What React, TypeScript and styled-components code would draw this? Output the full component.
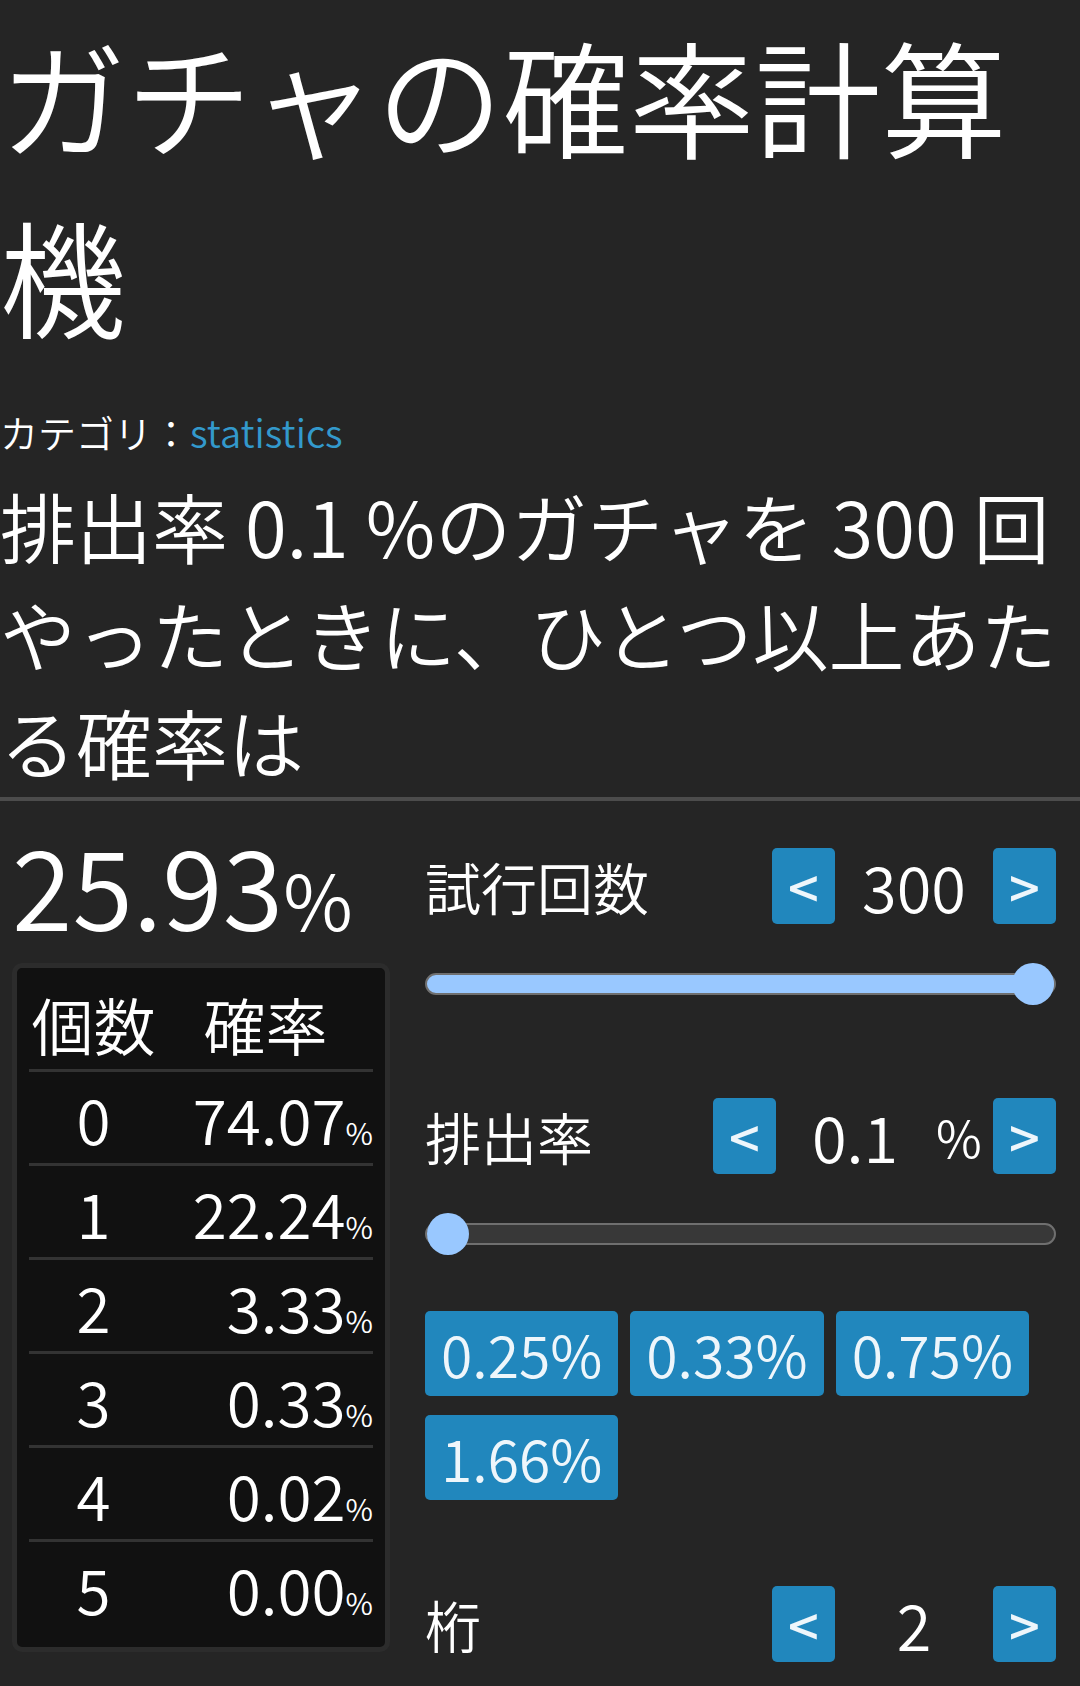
import { useState } from 'react';
import { createGlobalStyle, styled } from 'styled-components';

const FONT = `'Noto Sans CJK JP', 'Noto Sans', sans-serif`;
const BLUE = '#2187bd';
const TEXT_WEIGHT = 350;
const SHOWN_ROWS = 6;

const GlobalStyle = createGlobalStyle`
  html, body {
    margin: 0;
    padding: 0;
    background-color: #252525;
  }
  body {
    color: #ffffff;
    font-family: ${FONT};
    font-weight: ${TEXT_WEIGHT};
  }
  * {
    box-sizing: border-box;
  }
`;

const combination = (n: number, k: number) => {
  let result = 1;
  for (let i = 0; i < k; i++) {
    result = (result * (n - i)) / (i + 1);
  }
  return result;
};

const probability = (n: number, p: number, k: number) =>
  combination(n, k) * Math.pow(p, k) * Math.pow(1 - p, n - k);

const PRESETS = [0.25, 0.33, 0.75, 1.66];

const App = () => {
  const [trials, setTrials] = useState<number>(300);
  const [rate, setRate] = useState<number>(0.1);
  const [digits, setDigits] = useState<number>(2);

  const p = rate / 100;
  const atLeastOne = (1 - Math.pow(1 - p, trials)) * 100;

  const rows = Array.from({ length: SHOWN_ROWS }, (_, k) => (
    <TableRow key={k}>
      <CountCell>{k}</CountCell>
      <RateCell>
        {(probability(trials, p, k) * 100).toFixed(digits)}
        <SmallPercent>%</SmallPercent>
      </RateCell>
    </TableRow>
  ));

  const trialsFill = ((trials - 1) / (300 - 1)) * 100;
  const rateFill = ((rate - 0.1) / (10 - 0.1)) * 100;

  const changeRate = (delta: number) => () => {
    setRate((prev) => Math.max(0.1, Math.round((prev + delta) * 10) / 10));
  };

  return (
    <Page>
      <GlobalStyle />
      <Title>ガチャの確率計算機</Title>
      <Category>
        カテゴリ：<CategoryLink href="#">statistics</CategoryLink>
      </Category>
      <Question>
        排出率 {rate} %のガチャを {trials} 回やったときに、ひとつ以上あたる確率は
      </Question>
      <Divider />
      <Main>
        <ResultColumn>
          <BigResult>
            {atLeastOne.toFixed(digits)}
            <BigPercent>%</BigPercent>
          </BigResult>
          <TableBox>
            <HeaderRow>
              <HeaderCell>個数</HeaderCell>
              <HeaderCell>確率</HeaderCell>
            </HeaderRow>
            {rows}
          </TableBox>
        </ResultColumn>

        <ControlColumn>
          <ControlRow $top={0}>
            <Label>試行回数</Label>
            <StepButton onClick={() => setTrials((v) => Math.max(1, v - 1))}>&lt;</StepButton>
            <Value>{trials}</Value>
            <StepButton onClick={() => setTrials((v) => v + 1)}>&gt;</StepButton>
          </ControlRow>
          <Slider
            type="range"
            min={1}
            max={300}
            value={trials}
            onChange={(e) => setTrials(Number(e.target.value))}
            style={{
              background: `linear-gradient(to right, #99c8ff ${trialsFill}%, #383838 ${trialsFill}%)`,
            }}
          />

          <ControlRow $top={103}>
            <Label>排出率</Label>
            <StepButton onClick={changeRate(-0.1)}>&lt;</StepButton>
            <Value>{rate}</Value>
            <Unit>%</Unit>
            <StepButton onClick={changeRate(0.1)}>&gt;</StepButton>
          </ControlRow>
          <Slider
            type="range"
            min={0.1}
            max={10}
            step={0.1}
            value={rate}
            onChange={(e) => setRate(Number(e.target.value))}
            style={{
              background: `linear-gradient(to right, #99c8ff ${rateFill}%, #383838 ${rateFill}%)`,
            }}
          />

          <PresetList>
            {PRESETS.map((preset) => (
              <PresetButton key={preset} onClick={() => setRate(preset)}>
                {preset}%
              </PresetButton>
            ))}
          </PresetList>

          <ControlRow $top={86}>
            <Label>桁</Label>
            <StepButton onClick={() => setDigits((v) => Math.max(0, v - 1))}>&lt;</StepButton>
            <Value>{digits}</Value>
            <StepButton onClick={() => setDigits((v) => Math.min(6, v + 1))}>&gt;</StepButton>
          </ControlRow>
        </ControlColumn>
      </Main>
    </Page>
  );
};

const Page = styled.div`
  width: 1080px;
  min-height: 1686px;
  padding-top: 4px;
  background-color: #252525;
  overflow: hidden;
`;

const Title = styled.h1`
  margin: 0;
  font-size: 126px;
  font-weight: ${TEXT_WEIGHT};
  line-height: 180px;
  color: #ffffff;
`;

const Category = styled.div`
  margin-top: 41px;
  font-size: 38px;
  line-height: 54px;
  color: #ffffff;
`;

const CategoryLink = styled.a`
  color: #3399cc;
  text-decoration: none;
`;

const Question = styled.p`
  margin: 12px 0 0;
  font-size: 76px;
  line-height: 108px;
  color: #ffffff;
`;

const Divider = styled.hr`
  margin: 2px 0 0;
  height: 4px;
  border: none;
  background-color: #4c4c4c;
`;

const Main = styled.div`
  display: flex;
  gap: 35px;
  padding: 15px 24px 0 12px;
`;

const ResultColumn = styled.div`
  width: 378px;
  flex-shrink: 0;
`;

const BigResult = styled.div`
  height: 134px;
  font-size: 110px;
  line-height: 134px;
  white-space: nowrap;
`;

const BigPercent = styled.span`
  font-size: 76px;
  line-height: 1;
`;

const TableBox = styled.div`
  margin-top: 13px;
  padding: 10px 12px 14px;
  background-color: #111111;
  border: 5px solid #2c2c2c;
  border-radius: 10px;
`;

const TableRow = styled.div`
  display: grid;
  grid-template-columns: 129px 1fr;
  align-items: center;
  height: 94px;
  border-top: 3px solid #333333;
  font-size: 62px;
  line-height: 88px;
`;

const HeaderRow = styled(TableRow)`
  height: 91px;
  border-top: none;
`;

const HeaderCell = styled.div`
  text-align: center;
`;

const CountCell = styled.div`
  text-align: center;
`;

const RateCell = styled.div`
  text-align: right;
  white-space: nowrap;
`;

const SmallPercent = styled.span`
  font-size: 30px;
  line-height: 1;
`;

const ControlColumn = styled.div`
  flex: 1;
  padding-top: 32px;
`;

const ControlRow = styled.div<{ $top: number }>`
  display: flex;
  align-items: center;
  height: 76px;
  margin-top: ${({ $top }) => $top}px;
`;

const Label = styled.div`
  flex: 1;
  font-size: 56px;
  line-height: 76px;
`;

const StepButton = styled.button`
  width: 63px;
  height: 76px;
  padding: 0;
  border: none;
  border-radius: 5px;
  background-color: ${BLUE};
  color: #eef6fb;
  font-family: ${FONT};
  font-size: 54px;
  font-weight: 500;
  line-height: 76px;
  cursor: pointer;
`;

const Value = styled.div`
  width: 158px;
  font-size: 63px;
  line-height: 76px;
  text-align: center;
`;

const Unit = styled.div`
  width: 59px;
  padding-left: 2px;
  font-size: 50px;
  line-height: 76px;
`;

const Slider = styled.input`
  display: block;
  width: 100%;
  height: 22px;
  margin: 49px 0 0;
  border: 2px solid #6f6f6f;
  border-radius: 11px;
  appearance: none;
  -webkit-appearance: none;
  outline: none;

  &::-webkit-slider-runnable-track {
    height: 18px;
    background: transparent;
  }

  &::-webkit-slider-thumb {
    -webkit-appearance: none;
    width: 42px;
    height: 42px;
    margin-top: -12px;
    border-radius: 50%;
    background-color: #99c8ff;
    border: none;
  }

  &::-moz-range-thumb {
    width: 42px;
    height: 42px;
    border-radius: 50%;
    background-color: #99c8ff;
    border: none;
  }
`;

const PresetList = styled.div`
  display: flex;
  flex-wrap: wrap;
  gap: 19px 12px;
  margin-top: 66px;
`;

const PresetButton = styled.button`
  height: 85px;
  padding: 0 16px;
  border: none;
  border-radius: 5px;
  background-color: ${BLUE};
  color: #eef6fb;
  font-family: ${FONT};
  font-size: 57px;
  font-weight: ${TEXT_WEIGHT};
  line-height: 85px;
  cursor: pointer;
`;

export default App;
